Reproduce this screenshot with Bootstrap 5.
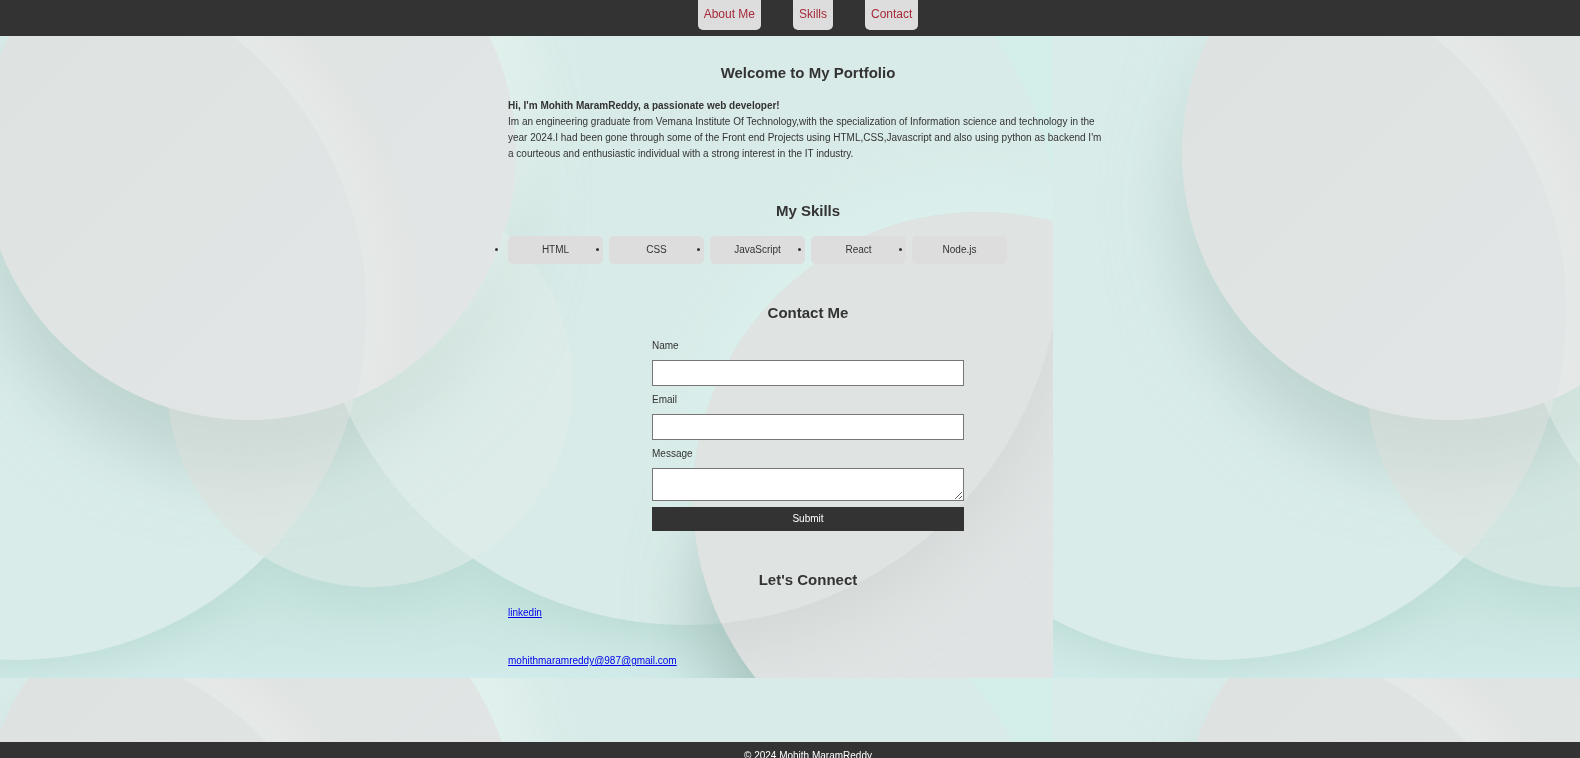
<!DOCTYPE html>
<html lang="en">
<head>
<meta charset="utf-8">
<meta name="viewport" content="width=device-width, initial-scale=1">
<title>Mohith MaramReddy</title>
<link href="https://cdn.jsdelivr.net/npm/bootstrap@5.3.0/dist/css/bootstrap.min.css" rel="stylesheet">
<style>
  body { font: 10px/16px "Liberation Sans", Arial, sans-serif; color: #333; background: #d8ebe9; }
  .backdrop { z-index: -1; }
  .bar { background: #333; padding-left: 36px; }
  .site-nav { gap: 32px; height: 36px; }
  .site-nav a { background: #ddd; color: #a52a3a; font-size: 12px; line-height: 18px; padding: 5px 6px 7px; border-radius: 0 0 5px 5px; text-decoration: none; }
  main { padding-left: 36px; margin-bottom: 61px; }
  .column { max-width: 600px; }
  section { padding: 25px 0 12px; }
  h2 { font-size: 15px; line-height: 24px; font-weight: 700; margin: 0 0 13px; text-align: center; }
  .skills { gap: 6px; }
  .skills li { width: 95px; padding: 6px; background: #ddd; border-radius: 5px; text-align: center; }
  .contact-form { max-width: 312px; gap: 6px; }
  .contact-form input, .contact-form textarea { border: 1px solid #767676; background: #fff; padding: 4px; height: 26px; }
  .contact-form textarea { height: 33px; }
  .contact-form button { background: #333; color: #fff; border: 0; height: 24px; }
  .links { gap: 32px; }
  .links a { color: #00e; }
  footer { color: #fff; padding-top: 6px; padding-bottom: 6px; }
</style>
<script src="https://cdn.jsdelivr.net/npm/bootstrap@5.3.0/dist/js/bootstrap.bundle.min.js"></script>
</head>
<body class="vh-100 overflow-hidden">
<svg class="backdrop position-fixed top-0 start-0 w-100 h-100" aria-hidden="true">
  <defs>
    <filter id="soft" x="-30%" y="-30%" width="160%" height="160%"><feGaussianBlur stdDeviation="24"/></filter>
    <filter id="softer" x="-40%" y="-40%" width="180%" height="180%"><feGaussianBlur stdDeviation="34"/></filter>
    <linearGradient id="base" x1="0" y1="0" x2="0" y2="1">
      <stop offset="0" stop-color="#d4eeea"/><stop offset=".5" stop-color="#d4eeea"/><stop offset=".8" stop-color="#c8e5e0"/><stop offset=".9" stop-color="#c9e5e1"/><stop offset="1" stop-color="#d1ebea"/>
    </linearGradient>
    <linearGradient id="pearl" x1="0" y1="0" x2="1" y2="1">
      <stop offset="0" stop-color="#dde2e1"/><stop offset="1" stop-color="#e3e6e6"/>
    </linearGradient>
    <linearGradient id="stone" x1="0" y1="0" x2="1" y2="1">
      <stop offset="0" stop-color="#dfe4e3"/><stop offset="1" stop-color="#e0e3e3"/>
    </linearGradient>
    <radialGradient id="crescent" gradientUnits="userSpaceOnUse" cx="164" cy="308" r="410">
      <stop offset=".85" stop-color="#e5e9e8"/><stop offset=".93" stop-color="#e3e6e5"/><stop offset="1" stop-color="#e0e3e2" stop-opacity="0"/>
    </radialGradient>
    <clipPath id="inA"><circle cx="164" cy="308" r="349"/></clipPath>
    <clipPath id="inB"><circle cx="396" cy="150" r="267"/></clipPath>
    <clipPath id="inC"><circle cx="517" cy="381" r="203"/></clipPath>
    <clipPath id="inD"><circle cx="833" cy="247" r="375"/></clipPath>
    <clipPath id="inE"><circle cx="1127" cy="496" r="287"/></clipPath>
    <clipPath id="lower"><rect y="380" width="1200" height="295"/></clipPath>
    <pattern id="bubbles" x="-147" y="3" width="1200" height="675" patternUnits="userSpaceOnUse">
      <rect width="1200" height="675" fill="url(#base)"/>
      <g clip-path="url(#lower)"><g filter="url(#soft)" fill="#b4d5ce" opacity=".65">
        <circle cx="164" cy="312" r="352"/>
        <circle cx="517" cy="392" r="205"/>
        <circle cx="833" cy="258" r="375"/>
      </g></g>
      <circle cx="164" cy="308" r="349" fill="#d9ecea"/>
      <circle cx="517" cy="381" r="203" fill="#d3e6e2"/>
      <circle cx="833" cy="247" r="375" fill="#d8ebe8"/>
      <ellipse cx="392" cy="202" rx="268" ry="266" fill="#a9c2bc" opacity=".56" filter="url(#softer)"/>
      <g clip-path="url(#inA)"><circle cx="517" cy="381" r="203" fill="#e6e4e2" opacity=".42"/></g>
      <g clip-path="url(#inD)"><circle cx="517" cy="381" r="203" fill="#e3ede9" opacity=".45"/></g>
      <circle cx="425" cy="110" r="264" fill="#e6f4f0" opacity=".7" filter="url(#soft)"/>
      <circle cx="396" cy="150" r="267" fill="url(#pearl)"/>
      <g clip-path="url(#inB)">
        <path d="M0-300h900v900H0z M164-41a349 349 0 1 0 1 0z" fill="url(#crescent)" fill-rule="evenodd"/>
      </g>
      <circle cx="1120" cy="462" r="290" fill="#dcf2ee" opacity=".6" filter="url(#soft)"/>
      <ellipse cx="1082" cy="598" rx="234" ry="200" fill="#94b1ab" opacity=".7" filter="url(#softer)"/>
      <circle cx="1127" cy="496" r="287" fill="url(#stone)"/>
      <g clip-path="url(#inE)">
        <circle cx="840" cy="276" r="370" fill="#cbcfce" opacity=".6" filter="url(#softer)"/>
        <circle cx="833" cy="247" r="375" fill="#dfe4e3"/>
      </g>
    </pattern>
  </defs>
  <rect width="100%" height="100%" fill="url(#bubbles)"/>
</svg>

<header class="bar">
  <nav class="site-nav d-flex justify-content-center align-items-start">
    <a href="#about">About Me</a>
    <a href="#skills">Skills</a>
    <a href="#contact">Contact</a>
  </nav>
</header>

<main>
  <div class="column mx-auto">
    <section id="about">
      <h2>Welcome to My Portfolio</h2>
      <p class="mb-0"><b>Hi, I'm Mohith MaramReddy, a passionate web developer!</b><br>
      Im an engineering graduate from Vemana Institute Of Technology,with the specialization of Information science and technology in the year 2024.I had been gone through some of the Front end Projects using HTML,CSS,Javascript and also using python as backend I'm a courteous and enthusiastic individual with a strong interest in the IT industry.</p>
    </section>
    <section id="skills">
      <h2>My Skills</h2>
      <ul class="skills d-flex flex-wrap p-0 m-0">
        <li>HTML</li>
        <li>CSS</li>
        <li>JavaScript</li>
        <li>React</li>
        <li>Node.js</li>
      </ul>
    </section>
    <section id="contact">
      <h2>Contact Me</h2>
      <form class="contact-form d-flex flex-column mx-auto">
        <label for="name">Name</label>
        <input type="text" id="name">
        <label for="email">Email</label>
        <input type="email" id="email">
        <label for="message">Message</label>
        <textarea id="message"></textarea>
        <button type="submit">Submit</button>
      </form>
    </section>
    <section id="connect">
      <h2>Let's Connect</h2>
      <div class="links d-flex flex-column align-items-start">
        <a href="#linkedin">linkedin</a>
        <a href="mailto:mohithmaramreddy@987@gmail.com">mohithmaramreddy@987@gmail.com</a>
      </div>
    </section>
  </div>
</main>

<footer class="bar text-center">© 2024 Mohith MaramReddy</footer>
</body>
</html>
